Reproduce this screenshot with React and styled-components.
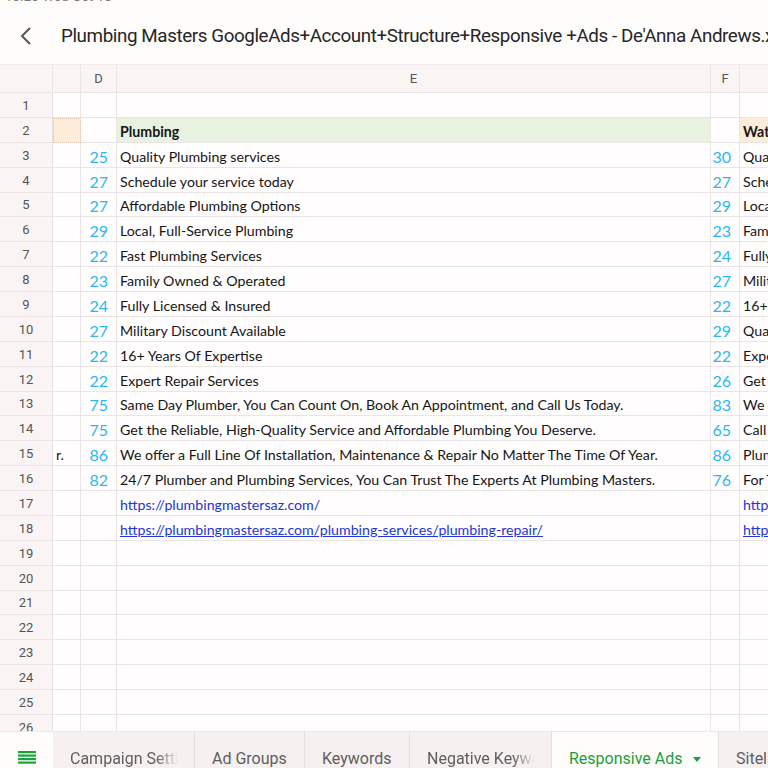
import React from "react";
import styled, { createGlobalStyle } from "styled-components";

const Global = createGlobalStyle`
  html, body { margin: 0; padding: 0; background: #fffcfc; overflow: hidden; }
  #root { width: 768px; height: 768px; }
`;

const Page = styled.div`
  width: 768px;
  height: 768px;
  display: flex;
  flex-direction: column;
  overflow: hidden;
  background: #fffcfc;
  font-family: Roboto, "Noto Sans", sans-serif;
`;

const Top = styled.div`
  height: 65px;
  flex: none;
  overflow: hidden;
  background: #fffcfc;
  border-bottom: 1px solid #f1eaea;
  box-sizing: border-box;
`;

const Status = styled.div`
  margin-top: -11px;
  padding-left: 5px;
  height: 14px;
  font-size: 13px;
  color: #777;
  letter-spacing: 0.3px;
`;

const TitleRow = styled.div`
  display: flex;
  align-items: center;
  height: 44px;
  margin-top: 11px;
  padding-left: 19px;
  gap: 28px;
  white-space: nowrap;
`;

const Back = styled.svg`
  flex: none;
`;

const Title = styled.div`
  flex: none;
  font-size: 18.8px;
  color: #262626;
  letter-spacing: -0.4px;
`;

const Sheet = styled.div`
  flex: 1;
  overflow: hidden;
  display: grid;
  grid-template-columns: 53px 28px 36px 594px 29px 260px;
  grid-auto-rows: 24.88px;
  grid-template-rows: 28px;
  background: #fffdfd;
`;

const Cell = styled.div`
  box-sizing: border-box;
  border-right: 1px solid #ece5e5;
  border-bottom: 1px solid #ece5e5;
  display: flex;
  align-items: center;
  overflow: hidden;
  white-space: nowrap;
  min-width: 0;
  font-family: Lato, "Open Sans", sans-serif;
  font-size: 14.2px;
  color: #161616;
  background: ${(p) => p.$bg || "transparent"};
  font-weight: ${(p) => (p.$bold ? 700 : 400)};
  padding: 3px 0 0 3px;
`;

const HeadCell = styled(Cell)`
  background: #fbf4f4;
  justify-content: center;
  padding: 0;
  font-family: Roboto, sans-serif;
  font-size: 13px;
  color: #555;
`;

const RowNum = styled(HeadCell)`
  border-right: 1px solid #e8dfdf;
  padding-top: 1px;
`;

const NumCell = styled(Cell)`
  justify-content: flex-end;
  padding: 3px 8px 0 0;
  font-size: 16px;
  color: #2bb8f0;
`;

const SelCell = styled(Cell)`
  background: #fdecd8;
  border: 1px dotted #d8c2b0;
`;

const Link = styled.span`
  color: #2336d6;
  text-decoration: ${(p) => (p.$u ? "underline" : "none")};
`;

const Tabs = styled.div`
  height: 37px;
  flex: none;
  display: flex;
  background: #f6f0f0;
  border-top: 1px solid #efe8e8;
  box-sizing: border-box;
  overflow: hidden;
`;

const MenuBtn = styled.div`
  width: 53px;
  flex: none;
  background: #fffcfc;
  display: flex;
  justify-content: center;
  padding-top: 19px;
  box-sizing: border-box;
`;

const Tab = styled.div`
  flex: none;
  width: ${(p) => p.$w}px;
  box-sizing: border-box;
  padding: 17px 16px 0 17px;
  border-right: 1px solid #e6dede;
  background: ${(p) => (p.$active ? "#fffcfc" : "transparent")};
  color: ${(p) => (p.$active ? "#1a9f3c" : "#5e5e5e")};
  font-size: 16px;
  line-height: 20px;
  white-space: nowrap;
  overflow: hidden;
  display: flex;
  align-items: flex-start;
  gap: 10px;
`;

const TabLabel = styled.span`
  overflow: hidden;
  ${(p) =>
    p.$fade
      ? `flex: 1; mask-image: linear-gradient(to right, #000 calc(100% - 22px), transparent); -webkit-mask-image: linear-gradient(to right, #000 calc(100% - 22px), transparent);`
      : ""}
`;

const Caret = styled.span`
  width: 0;
  height: 0;
  margin-top: 8px;
  border-left: 4.5px solid transparent;
  border-right: 4.5px solid transparent;
  border-top: 5px solid #1a9f3c;
`;

const dCol = ["", "", 25, 27, 27, 29, 22, 23, 24, 27, 22, 22, 75, 75, 86, 82];
const eCol = [
  "",
  "Plumbing",
  "Quality Plumbing services",
  "Schedule your service today",
  "Affordable Plumbing Options",
  "Local, Full-Service Plumbing",
  "Fast Plumbing Services",
  "Family Owned & Operated",
  "Fully Licensed & Insured",
  "Military Discount Available",
  "16+ Years Of Expertise",
  "Expert Repair Services",
  "Same Day Plumber, You Can Count On, Book An Appointment, and Call Us Today.",
  "Get the Reliable, High-Quality Service and Affordable Plumbing You Deserve.",
  "We offer a Full Line Of Installation, Maintenance & Repair No Matter The Time Of Year.",
  "24/7 Plumber and Plumbing Services, You Can Trust The Experts At Plumbing Masters.",
];
const fCol = ["", "", 30, 27, 29, 23, 24, 27, 22, 29, 22, 26, 83, 65, 86, 76];
const gCol = [
  "",
  "Water Heaters",
  "Quality Water Heater Service",
  "Schedule your service today",
  "Local Water Heater Experts",
  "Family Owned & Operated",
  "Fully Licensed & Insured",
  "Military Discount Available",
  "16+ Years Of Expertise",
  "Quality Water Heater Repair",
  "Expert Repair Services",
  "Get Your Water Heater Fixed Today",
  "We Install & Repair All Water Heaters",
  "Call Us Today For Water Heater Service",
  "Plumbing Masters Water Heater Experts",
  "For The Best Water Heater Service",
];

function Row({ i }) {
  const n = i + 1;
  let eNode = eCol[i] || "";
  let gNode = gCol[i] || "";
  if (n === 17) {
    eNode = <Link>https://plumbingmastersaz.com/</Link>;
    gNode = <Link>https://plumbingmastersaz.com/water-heaters/</Link>;
  }
  if (n === 18) {
    eNode = <Link $u>https://plumbingmastersaz.com/plumbing-services/plumbing-repair/</Link>;
    gNode = <Link $u>https://plumbingmastersaz.com/water-heaters/repair/</Link>;
  }
  return (
    <>
      <RowNum>{n}</RowNum>
      {n === 2 ? <SelCell /> : <Cell>{n === 15 ? "r." : ""}</Cell>}
      <NumCell>{dCol[i] || ""}</NumCell>
      <Cell $bg={n === 2 ? "#e9f1e0" : undefined} $bold={n === 2}>
        {eNode}
      </Cell>
      <NumCell>{fCol[i] || ""}</NumCell>
      <Cell $bg={n === 2 ? "#fdecd8" : undefined} $bold={n === 2}>
        {gNode}
      </Cell>
    </>
  );
}

function MenuIcon() {
  return (
    <svg width="18" height="14" viewBox="0 0 18 14">
      {[0, 3.5, 7, 10.5].map((y) => (
        <rect key={y} x="0" y={y} width="18" height="2.2" fill="#1aa53c" />
      ))}
    </svg>
  );
}

export default function App() {
  const rows = Array.from({ length: 27 }, (_, i) => i);
  return (
    <Page>
      <Global />
      <Top>
        <Status>10:25 Wed Oct 18</Status>
        <TitleRow>
          <Back width="14" height="20" viewBox="0 0 14 20">
            <polyline points="11,2 3,10 11,18" fill="none" stroke="#555" strokeWidth="2" />
          </Back>
          <Title>Plumbing Masters GoogleAds+Account+Structure+Responsive +Ads - De'Anna Andrews.xlsx</Title>
        </TitleRow>
      </Top>
      <Sheet>
        <HeadCell />
        <HeadCell />
        <HeadCell>D</HeadCell>
        <HeadCell>E</HeadCell>
        <HeadCell>F</HeadCell>
        <HeadCell />
        {rows.map((i) => (
          <Row key={i} i={i} />
        ))}
      </Sheet>
      <Tabs>
        <MenuBtn>
          <MenuIcon />
        </MenuBtn>
        <Tab $w={142}>
          <TabLabel $fade>Campaign Settings</TabLabel>
        </Tab>
        <Tab $w={110}>
          <TabLabel>Ad Groups</TabLabel>
        </Tab>
        <Tab $w={105}>
          <TabLabel>Keywords</TabLabel>
        </Tab>
        <Tab $w={142}>
          <TabLabel $fade>Negative Keywords</TabLabel>
        </Tab>
        <Tab $w={167} $active>
          <TabLabel>Responsive Ads</TabLabel>
          <Caret />
        </Tab>
        <Tab $w={120}>
          <TabLabel>Sitelinks</TabLabel>
        </Tab>
      </Tabs>
    </Page>
  );
}
